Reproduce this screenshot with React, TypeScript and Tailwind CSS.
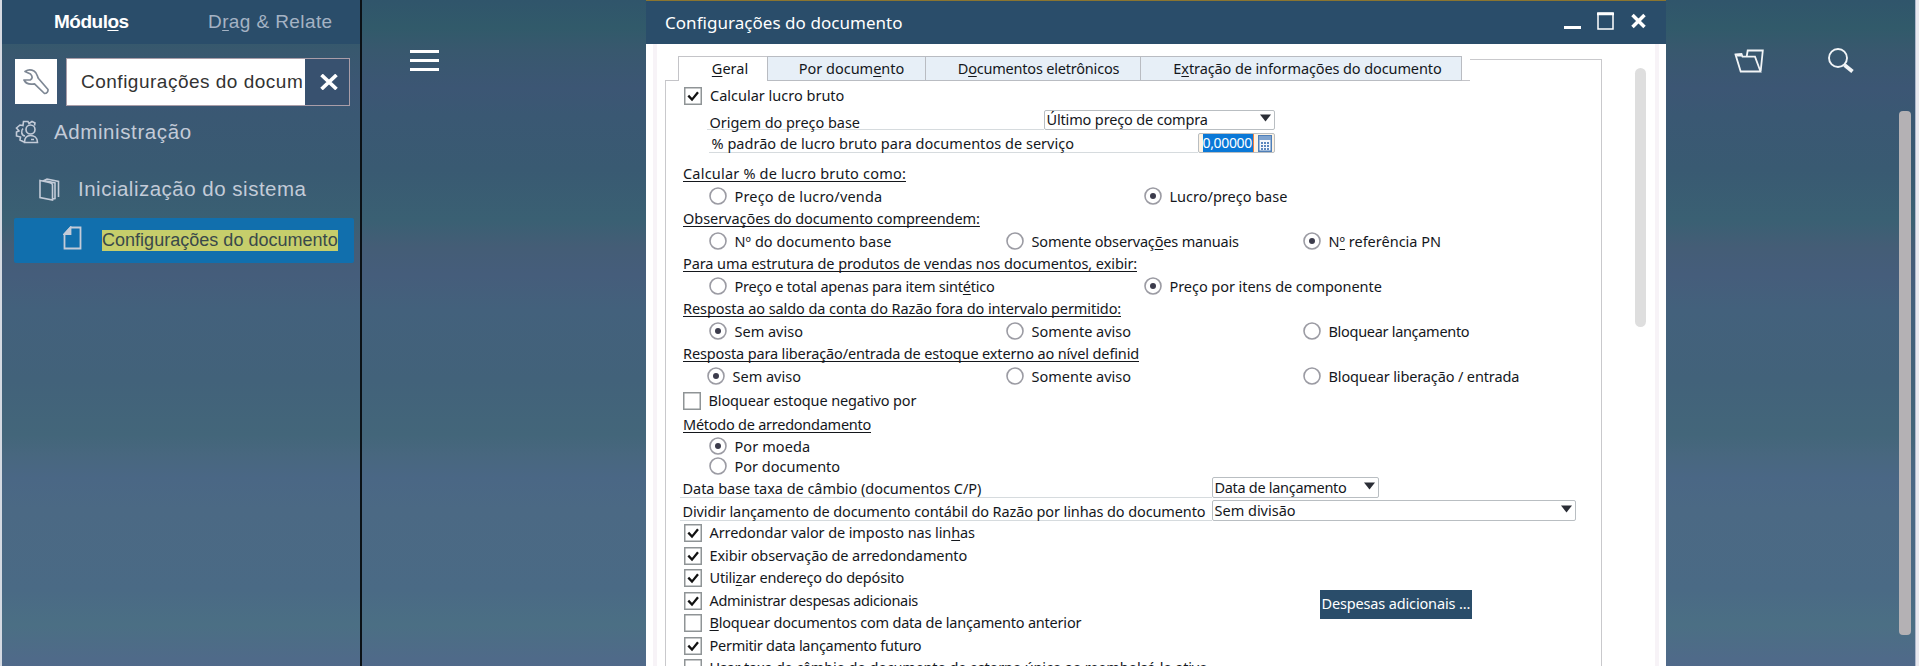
import React from "react";

const ui = "font-['Noto_Sans',sans-serif]";

function T({ s, c = "" }: { s: string; c?: string }) {
  const parts = s.split("_");
  return (
    <span className={`whitespace-nowrap ${c}`}>
      {parts.map((p, i) =>
        i % 2 ? (
          <span key={i} className="underline decoration-1 underline-offset-[2px] [text-decoration-skip-ink:none]">{p}</span>
        ) : (
          <React.Fragment key={i}>{p}</React.Fragment>
        )
      )}
    </span>
  );
}

function Heading({ s, c = "" }: { s: string; c?: string }) {
  return (
    <div className="flex h-[22.5px] shrink-0 items-center pl-[7.5px]">
      <span className={`-mt-0.5 overflow-hidden leading-[22px] whitespace-nowrap underline decoration-1 underline-offset-[2px] [text-decoration-skip-ink:none] ${c}`}>{s}</span>
    </div>
  );
}

function Radio({ s, on, c = "" }: { s: string; on?: boolean; c?: string }) {
  return (
    <label className="flex items-center gap-[8px]">
      <svg width="18" height="18" viewBox="0 0 18 18" className="-mt-0.5 shrink-0">
        <circle cx="9" cy="9" r="8" fill="#fff" stroke="#9b9ba3" strokeWidth="1.6" />
        {on && <circle cx="9" cy="9" r="3" fill="#3c3c4c" />}
      </svg>
      <T s={s} c={c} />
    </label>
  );
}

function Check({ s, on, c = "" }: { s: string; on?: boolean; c?: string }) {
  return (
    <label className="flex items-center gap-2">
      <svg width="18" height="18" viewBox="0 0 18 18" className="shrink-0">
        <rect x="0.75" y="0.75" width="16.5" height="16.5" fill="#fff" stroke="#8f9496" strokeWidth="1.5" />
        {on && <path d="M4.3 8.6 8 12.6 14 5.2" fill="none" stroke="#111" strokeWidth="2.3" />}
      </svg>
      <T s={s} c={c} />
    </label>
  );
}

const Two = ({ a, b }: { a: React.ReactNode; b: React.ReactNode }) => (
  <div className="grid h-[22.5px] grid-cols-[435px_1fr] items-center pl-[33px]">{a}{b}</div>
);
const Three = ({ children }: { children: React.ReactNode }) => (
  <div className="grid h-[22.5px] grid-cols-[297px_297px_1fr] items-center pl-[33px]">{children}</div>
);

function Select({ s, c }: { s: string; c: string }) {
  return (
    <div className={`flex shrink-0 items-center justify-between rounded-[2px] border border-[#b9bec2] bg-white pr-[3px] pl-[2px] ${c}`}>
      <T s={s} />
      <svg width="11" height="8" viewBox="0 0 11 8" className="-mt-1"><path d="M0 0.5H11L5.5 7.5Z" fill="#2b2e36" /></svg>
    </div>
  );
}

export default function App() {
  return (
    <div className="flex h-[666px] w-[1919px] overflow-hidden bg-[linear-gradient(180deg,#30556b_0px,#315a6a_28px,#38586e_50px,#3c5674_88px,#3a5873_115px,#395a72_170px,#3a6073_220px,#445d76_247px,#455d7b_275px,#43617c_310px,#42627a_380px,#43667a_435px,#48677f_455px,#4a6785_478px,#4b6984_510px,#4a6a85_590px,#4b6f84_625px,#50698a_666px)]">
      <aside className="flex h-full w-[362px] shrink-0 flex-col border-r-2 border-r-[#0b1116] border-l-2 border-l-[#d5dae2] font-['Liberation_Sans',sans-serif] text-[19px] text-[#c3cbd8]">
        <header className="flex h-11 items-center bg-[#2a4d6a]">
          <T s="Módul_o_s" c="ml-[52px] w-[154px] font-bold tracking-[-0.5px] text-white" />
          <T s="D_r_ag & Relate" c="tracking-[0.4px] text-[#a5b3c4]" />
        </header>
        <div className="flex h-[62px] items-center pt-[13px] pl-[13px]">
          <div className="flex h-[45px] w-[42px] items-center justify-center bg-white">
            <svg width="26" height="26" viewBox="0 0 26 26" fill="none" stroke="#7d8794" strokeWidth="1.7" strokeLinejoin="round">
              <path d="M2 2.500C5 .5 8 .5 11 2C14.500 4 14 7 15.500 9.500L25 20.500C25.200 22.500 24 24.500 21.500 24.500L11.500 14.800C8 15.500 3 15 1 11L7.500 10.800C9.500 9.500 9.800 7.500 7.500 5Z" />
            </svg>
          </div>
          <div className="ml-[9px] flex h-12 w-[284px] border border-[#a99da8]">
            <div className="w-[238px] overflow-hidden bg-white pl-[14px] leading-[46px] text-[#333]">
              <T s="Configurações do docum" c="tracking-[0.5px]" />
            </div>
            <div className="flex flex-1 items-center justify-center bg-[#38516f]">
              <svg width="18" height="16" viewBox="0 0 18 16" stroke="#fff" strokeWidth="3.700" className="ml-[3px]"><path d="M1.500 1 16.500 15M16.500 1 1.500 15" /></svg>
            </div>
          </div>
        </div>
        <div className="mt-[5px] flex h-[42px] items-center pl-[13px]">
          <svg width="24" height="24" viewBox="0 0 24 24" fill="none" stroke="currentColor" strokeWidth="1.600">
            <path d="M9 22 5 20 5.500 17 1.500 16V12L4 11 1.500 8 5 5 8 5.500 8.500 1.500H13L14 3.500 17 1.500 20 3 19.500 5.500M10 16C6.500 15.500 5.500 11 8 8.500" />
            <circle cx="15.500" cy="9.500" r="4.500" /><path d="M9.500 22.500C9.500 17.500 12 15.500 15.500 15.500S22.500 17.500 22.500 22.500ZM16 19.500H19" />
          </svg>
          <T s="Administração" c="ml-[15px] text-[20.500px] tracking-[0.6px]" />
        </div>
        <div className="mt-[15px] flex h-[42px] items-center pl-[37px]">
          <svg width="21" height="23" viewBox="0 0 21 23" fill="none" stroke="currentColor" strokeWidth="1.600"><path d="M1 2.500 8 4C11 4.500 13.500 5.500 13.500 7V22L1 19.500ZM13.500 21 16 20.500V5L5 2.500 8 1 19.500 3.500V19" /></svg>
          <T s="Inicialização do sistema" c="ml-[18px] text-[20.500px] tracking-[0.5px]" />
        </div>
        <div className="mt-2 ml-[12px] flex h-[45px] w-[340px] items-center rounded-[2px] bg-[#116fad] pl-[49px]">
          <svg width="19" height="24" viewBox="0 0 19 24" fill="none" stroke="currentColor" strokeWidth="1.800" className="-mt-[5px]"><path d="M7.500 1.500H17.500V22.500H1.500V8Z" /><path d="M7.500 1.500V8H1.500Z" fill="currentColor" /></svg>
          <span className="ml-[20px] h-[21px] bg-[#c6ce6b] text-[18px] leading-[21px] text-[#39494a]"><T s="Configurações do documento" c="tracking-[0.02px]" /></span>
        </div>
      </aside>
      <div className="w-[284px] shrink-0 pt-[50px] pl-12">
        <svg width="29" height="22" viewBox="0 0 29 22" stroke="#fff" strokeWidth="2.800"><path d="M0 1.500H29M0 10.500H29M0 19.500H29" /></svg>
      </div>
      <main className={`flex h-full w-[1020px] shrink-0 flex-col bg-white text-[14.500px] text-[#14171c] ${ui}`}>
        <header className="flex h-11 shrink-0 items-center justify-between border-t border-t-[#8a7530] bg-[#2a4d6a] pr-[20px] pl-[19px] text-white">
          <T s="Configurações do documento" c="text-[17px] tracking-[0.04px]" />
          <svg width="82" height="18" viewBox="0 0 82 18" fill="none" stroke="#fff" className="-mt-[3px]"><path d="M0 15.500H17" strokeWidth="3" /><path d="M34 1H49V17H34Z" strokeWidth="1.500" /><path d="M33 2H50" strokeWidth="2.500" /><path d="M68.500 3 80.500 15M80.500 3 68.500 15" strokeWidth="3.500" /></svg>
        </header>
        <div className="mx-[7px] flex min-h-0 flex-1 border-x-4 border-[#f7f3f7]">
          <div className="ml-2 w-[937px] pt-3">
            <div className="flex h-[25px]">
              <i className="w-[13px] border-b border-[#c4c4c8]" />
              <div className="flex w-[89px] justify-center border-t border-l border-[#c4c4c8] pl-[14px] leading-[23px]"><T s="_G_eral" /></div>
              <div className="flex w-[159px] justify-center border border-[#b9bcc2] bg-[#e7eff7] pl-[10px] leading-[23px]"><T s="Por docum_e_nto" /></div>
              <div className="flex w-[215px] justify-center border-y border-r border-[#b9bcc2] bg-[#e7eff7] pl-[11px] leading-[23px]"><T s="D_o_cumentos eletrônicos" c="tracking-[-0.2px]" /></div>
              <div className="flex w-[321px] justify-center border-y border-r border-[#b9bcc2] bg-[#e7eff7] pl-[13px] leading-[23px]"><T s="E_x_tração de informações do documento" c="tracking-[-0.1px]" /></div>
              <i className="w-2 border-b border-[#c4c4c8]" />
              <i className="mt-[3px] flex-1 border-t border-r border-[#c9c9cc]" />
            </div>
            <div className="flex h-[600px] flex-col border-x border-[#c9c9cc] pl-[9.500px]">
              <div className="mt-[4px] flex h-[22px] shrink-0 items-center pl-[8.500px]"><Check s="Calcular lucro bruto" on /></div>
              <div className="mt-[3px] flex h-5 shrink-0 pl-[31px]">
                <div className="w-[337px] border-b border-[#d6dbde] pl-[3px] leading-[24px] tracking-[-0.05px]"><T s="Origem do preço base" /></div>
                <Select s="Último preço de compra" c="h-[20px] w-[231px] tracking-[-0.15px]" />
              </div>
              <div className="mt-[3px] flex h-5 shrink-0 pl-[33px]">
                <div className="w-[489px] border-b border-[#d6dbde] pl-[3px] leading-[21px] tracking-[0.03px]"><T s="% padrão de lucro bruto para documentos de serviço" /></div>
                <div className="flex h-5 w-[77px] shrink-0 items-center rounded-[2px] border border-[#b9bec2] bg-[#fdf3e4] pr-0.5 pl-1">
                  <span className="h-[18px] w-[51px] border-r border-[#f08040] bg-[#0a78d7] text-[14px] leading-[18px] tracking-[-0.35px] text-white">0,00000</span>
                  <svg width="14" height="17" viewBox="0 0 14 17" className="ml-auto"><path d="M.75.750H13.250V16.250H.75Z" fill="#f4f8fc" stroke="#4f7fb8" strokeWidth="1.500" /><path d="M1 1H13V5H1Z" fill="#7fa3cf" /><path d="M3 8H11M3 11H11M3 14H11" stroke="#5b87bd" strokeWidth="2" strokeDasharray="2 1" /></svg>
                </div>
              </div>
              <div className="mt-[9.750px] shrink-0">
                <Heading s="Calcular % de lucro bruto como:" c="tracking-[0.2px]" />
                <Two a={<Radio s="Preço de lucro/venda" c="tracking-[0.19px]" />} b={<Radio s="Lucro/preço base" on />} />
                <Heading s="Observações do documento compreendem:" c="tracking-[-0.05px]" />
                <Three><Radio s="Nº do documento base" c="tracking-[0.05px]" /><Radio s="Somente observaç_õ_es manuais" c="tracking-[-0.17px]" /><Radio s="N_º_ referência PN" on /></Three>
                <Heading s="Para uma estrutura de produtos de vendas nos documentos, exibir:" c="tracking-[-0.08px]" />
                <Two a={<Radio s="Preço e total apenas para item sint_é_tico" c="tracking-[-0.22px]" />} b={<Radio s="Preço por itens de componente" on c="tracking-[-0.05px]" />} />
                <Heading s="Resposta ao saldo da conta do Razão fora do intervalo permitido:" c="tracking-[-0.08px]" />
                <Three><Radio s="Sem aviso" on /><Radio s="Somente aviso" /><Radio s="Bloquear lançamento" c="tracking-[-0.3px]" /></Three>
                <Heading s="Resposta para liberação/entrada de estoque externo ao nível definid" c="tracking-[-0.14px]" />
                <Three><div className="-ml-0.5"><Radio s="Sem aviso" on /></div><Radio s="Somente aviso" /><Radio s="Bloquear liberação / entrada" c="tracking-[-0.13px]" /></Three>
              </div>
              <div className="flex h-[26px] shrink-0 items-center pl-[7px]"><Check s="Bloquear estoque negativo por" c="tracking-[-0.13px]" /></div>
              <Heading s="Método de arredondamento" c="tracking-[-0.25px]" />
              <div className="flex h-[20.500px] shrink-0 items-center pl-[33px]"><Radio s="Por moeda" on c="tracking-[0.1px]" /></div>
              <div className="flex h-[20.500px] shrink-0 items-center pl-[33px]"><Radio s="Por documento" /></div>
              <div className="flex h-[21px] shrink-0 pl-[4px]">
                <div className="w-[532px] shrink-0 border-b border-[#d6dbde] pl-[3px] leading-[22px] tracking-[-0.04px]"><T s="Data base taxa de câmbio (documentos C/P)" /></div>
                <Select s="Data de lançamento" c="h-[21px] w-[167px] tracking-[-0.3px]" />
              </div>
              <div className="mt-[2px] flex h-[21px] shrink-0 pl-[4px]">
                <div className="w-[532px] shrink-0 border-b border-[#d6dbde] pl-[3px] leading-[22px] tracking-[-0.11px]"><T s="Dividir lançamento de documento contábil do Razão por linhas do documento" /></div>
                <Select s="Sem divisão" c="h-[21px] w-[364px]" />
              </div>
              <div className="flex shrink-0 pt-[0.500px] pl-[8px]">
                <div className="w-[636px] shrink-0 [&>*]:h-[22.500px]">
                  <Check s="Arredondar valor de imposto nas lin_h_as" on c="tracking-[-0.1px]" />
                  <Check s="Exibir observação de arredondamento" on c="tracking-[-0.1px]" />
                  <Check s="Utili_z_ar endereço do depósito" on c="tracking-[-0.2px]" />
                  <Check s="Administrar despesas adicionais" on c="tracking-[-0.34px]" />
                  <Check s="_B_loquear documentos com data de lançamento anterior" c="tracking-[-0.21px]" />
                  <Check s="Permitir data lançamento futuro" on c="tracking-[-0.27px]" />
                  <Check s="Usar taxa de câmbio do documento de estorno único ao reembolsá-lo ativo" c="tracking-[-0.2px]" />
                </div>
                <button className="mt-[68px] h-[29px] w-[152px] shrink-0 bg-[#2a4d6a] pb-[2px] text-left leading-[25px] text-white"><T s="Despesas adicionais ..." c="pl-[2px] tracking-[-0.15px]" /></button>
              </div>
            </div>
          </div>
          <div className="mt-6 ml-[33px] h-[259px] w-[11px] rounded-full bg-[#dedede]" />
        </div>
      </main>
      <div className="flex flex-1 pt-[48px] pl-[68px]">
        <svg width="30" height="26" viewBox="0 0 30 26" fill="none" stroke="#f2f5f7" strokeWidth="1.800"><path d="M1.500 6.500 7.500 6 8.500 8.700H21L26.500 23.500H6.700ZM12.700 8.500 13.700 2.500H28.800L26.700 23" /><path d="M2 6H7L8 8.500H3Z" fill="#f2f5f7" stroke="none" /></svg>
        <svg width="27" height="26" viewBox="0 0 27 26" fill="none" stroke="#f2f5f7" className="ml-[63px]"><circle cx="11" cy="10" r="9" strokeWidth="1.900" /><path d="M17.500 17 25.500 23.500" strokeWidth="3.800" /></svg>
        <div className="mt-[63px] ml-[45px] h-[524px] w-3 rounded-[4px] bg-[#b4b1b4]" />
        <div className="-mt-12 ml-auto h-[666px] w-1 border-l border-[#aeb8cc] bg-[#e8e8ee]" />
      </div>
    </div>
  );
}
